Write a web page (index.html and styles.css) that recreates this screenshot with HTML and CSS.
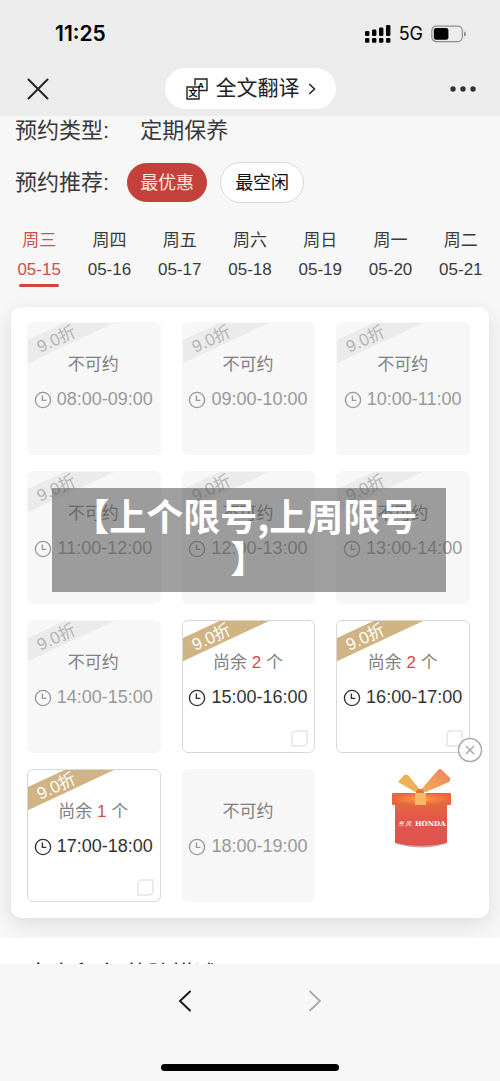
FILE: index.html
```html
<!DOCTYPE html>
<html lang="zh-CN">
<head>
<meta charset="utf-8">
<meta name="viewport" content="width=device-width, initial-scale=1">
<title>预约</title>
<link rel="stylesheet" href="styles.css">
</head>
<body>
<svg class="defs" aria-hidden="true">
  <symbol id="clock" viewBox="0 0 18 18"><circle cx="9" cy="9" r="7.6"/><path d="M8.4 4.6V9.4H12.4"/></symbol>
</svg>
<div class="app">
  <header class="top">
    <div class="status">
      <span class="time">11:25</span>
      <div class="status-icons">
        <svg width="26" height="18" viewBox="0 0 26 18" aria-hidden="true"><rect x="0" y="6" width="4.4" height="5" rx="1.3"/><rect x="7" y="4.500" width="4.400" height="6.500" rx="1.300"/><rect x="14" y="2.500" width="4.400" height="8.500" rx="1.300"/><rect x="21" y="0" width="4.400" height="11" rx="1.300"/><rect x="0" y="13" width="4.400" height="4.800" rx="1.300"/><rect x="7" y="13" width="4.400" height="4.800" rx="1.300"/><rect x="14" y="13" width="4.400" height="4.800" rx="1.300"/><rect x="21" y="13" width="4.400" height="4.800" rx="1.300"/></svg>
        <span class="network">5G</span>
        <svg width="36" height="18" viewBox="0 0 36 18" aria-hidden="true"><rect x=".8" y="1.200" width="30.500" height="15.400" rx="4.500" fill="none" stroke="#8d8d8d" stroke-width="1.200"/><rect x="2.800" y="3" width="14.600" height="11.800" rx="2.500"/><path d="M33 6.500q2 .5 2 2.500t-2 2.500z" fill="#8d8d8d"/></svg>
      </div>
    </div>
    <div class="bar">
      <button class="icon-btn" type="button" aria-label="关闭"><svg width="22" height="22" viewBox="0 0 22 22"><path d="M1.500 1.500 20.500 20.500M20.500 1.500 1.500 20.500" fill="none" stroke="#262626" stroke-width="2" stroke-linecap="round"/></svg></button>
      <button class="translate" type="button">
        <svg width="22" height="22" viewBox="0 0 22 22" aria-hidden="true"><path d="M9 7.500V1H21V12.500H13.500M1 9H13V21H1Z" fill="none" stroke="#222" stroke-width="1.400"/><text class="glyph-a" x="15" y="9.600" text-anchor="middle">A</text><text class="glyph-w" x="7" y="18.400" text-anchor="middle">文</text></svg>
        <span>全文翻译</span>
        <svg width="8" height="12" viewBox="0 0 8 12" aria-hidden="true"><path d="M1.300 1 6.500 6 1.300 11" fill="none" stroke="#222" stroke-width="1.500"/></svg>
      </button>
      <button class="icon-btn" type="button" aria-label="更多"><svg width="26" height="6" viewBox="0 0 26 6" fill="#333"><circle cx="3" cy="3" r="2.700"/><circle cx="13" cy="3" r="2.700"/><circle cx="23" cy="3" r="2.700"/></svg></button>
    </div>
  </header>

  <main class="content">
    <div class="field type"><span>预约类型:</span><span class="value">定期保养</span></div>
    <div class="field recommend"><span>预约推荐:</span>
      <div class="chips"><button class="chip chip-on" type="button">最优惠</button><button class="chip" type="button">最空闲</button></div>
    </div>

    <nav class="days">
      <a class="day day-on" href="#d15"><span>周三</span><span>05-15</span></a>
      <a class="day" href="#d16"><span>周四</span><span>05-16</span></a>
      <a class="day" href="#d17"><span>周五</span><span>05-17</span></a>
      <a class="day" href="#d18"><span>周六</span><span>05-18</span></a>
      <a class="day" href="#d19"><span>周日</span><span>05-19</span></a>
      <a class="day" href="#d20"><span>周一</span><span>05-20</span></a>
      <a class="day" href="#d21"><span>周二</span><span>05-21</span></a>
    </nav>

    <section class="slots">
      <div class="slot"><span class="ribbon">9.0折</span><span class="state">不可约</span><span class="hours"><svg><use href="#clock"/></svg>08:00-09:00</span></div>
      <div class="slot"><span class="ribbon">9.0折</span><span class="state">不可约</span><span class="hours"><svg><use href="#clock"/></svg>09:00-10:00</span></div>
      <div class="slot"><span class="ribbon">9.0折</span><span class="state">不可约</span><span class="hours"><svg><use href="#clock"/></svg>10:00-11:00</span></div>
      <div class="slot"><span class="ribbon">9.0折</span><span class="state">不可约</span><span class="hours"><svg><use href="#clock"/></svg>11:00-12:00</span></div>
      <div class="slot"><span class="ribbon">9.0折</span><span class="state">不可约</span><span class="hours"><svg><use href="#clock"/></svg>12:00-13:00</span></div>
      <div class="slot"><span class="ribbon">9.0折</span><span class="state">不可约</span><span class="hours"><svg><use href="#clock"/></svg>13:00-14:00</span></div>
      <div class="slot"><span class="ribbon">9.0折</span><span class="state">不可约</span><span class="hours"><svg><use href="#clock"/></svg>14:00-15:00</span></div>
      <label class="slot open"><span class="ribbon">9.0折</span><span class="state">尚余 <b>2</b> 个</span><span class="hours"><svg><use href="#clock"/></svg>15:00-16:00</span><input class="pick" type="checkbox"></label>
      <label class="slot open"><span class="ribbon">9.0折</span><span class="state">尚余 <b>2</b> 个</span><span class="hours"><svg><use href="#clock"/></svg>16:00-17:00</span><input class="pick" type="checkbox"></label>
      <label class="slot open"><span class="ribbon">9.0折</span><span class="state">尚余 <b>1</b> 个</span><span class="hours"><svg><use href="#clock"/></svg>17:00-18:00</span><input class="pick" type="checkbox"></label>
      <div class="slot"><span class="state">不可约</span><span class="hours"><svg><use href="#clock"/></svg>18:00-19:00</span></div>
    </section>

    <section class="remarks">客户留言/故障描述</section>

    <h1 class="banner">【上个限号,上周限号&nbsp;<br>】</h1>

    <aside class="gift">
      <button class="gift-close" type="button" aria-label="关闭礼品"><svg width="26" height="26" viewBox="0 0 26 26"><circle cx="13" cy="13" r="11.500" fill="#fff" fill-opacity=".7"/><path d="M9 9l8 8M17 9l-8 8"/></svg></button>
      <svg class="gift-box" width="60" height="80" viewBox="0 0 60 80" role="img" aria-label="东风 HONDA">
        <defs>
          <linearGradient id="body" x1="0" y1="0" x2="0" y2="1"><stop offset="0" stop-color="#e5683f"/><stop offset=".35" stop-color="#e25749"/><stop offset="1" stop-color="#df5351"/></linearGradient>
          <radialGradient id="lid"><stop offset="0" stop-color="#f8a144"/><stop offset="1" stop-color="#e8663f"/></radialGradient>
          <linearGradient id="bow" x1="0" y1="1" x2="1" y2="0"><stop offset="0" stop-color="#f3ad55"/><stop offset="1" stop-color="#ed855f"/></linearGradient>
        </defs>
        <path d="M5 75Q30 82 53 75V71H5Z" fill="#d9a3a8"/>
        <path d="M3 34H55V74Q30 80 3 74Z" fill="url(#body)"/>
        <path d="M6 13 12 6Q14 5 16 6L29 22 25 24Z" fill="#efb057"/>
        <path d="M28 22 46 1Q48-1 50 1L58 9Q59 11 57 13L34 23Z" fill="url(#bow)"/>
        <rect y="24" width="59" height="12" rx="1" fill="url(#lid)"/>
        <path d="M24 24q0-4 4-4t4 4z" fill="#da763e"/>
        <path d="M23 24H34V36H23Z" fill="#f9b765"/>
        <text class="gift-cn" x="6" y="57">东 风</text><text class="gift-en" x="23" y="57">HONDA</text>
      </svg>
    </aside>
  </main>

  <footer class="bottom">
    <div class="pager">
      <button class="icon-btn" type="button" aria-label="后退"><svg width="14" height="22" viewBox="0 0 14 22"><path d="M12 1.500 2 11 12 20.500" fill="none" stroke="#1d1d1d" stroke-width="2" stroke-linecap="round"/></svg></button>
      <button class="icon-btn" type="button" aria-label="前进"><svg width="14" height="22" viewBox="0 0 14 22"><path d="M2 1.500 12 11 2 20.500" fill="none" stroke="#aaa" stroke-width="1.800" stroke-linecap="round"/></svg></button>
    </div>
    <div class="home"></div>
  </footer>
</div>
</body>
</html>
```
FILE: styles.css
```css
* { box-sizing: border-box; }
body { margin: 0; font-family: "Liberation Sans", "Noto Sans CJK SC", sans-serif; color: #3a3a3a; background: #f7f7f7; }
button { font: inherit; color: inherit; border: 0; padding: 0; background: none; }
svg { display: block; flex: none; }
.defs { position: absolute; width: 0; height: 0; }
.app { display: flex; flex-direction: column; height: 100vh; }

.top { flex: none; background: #ececec; padding: 16px 24px 7px; }
.status { display: flex; align-items: center; justify-content: space-between; height: 36px; padding: 0 9px 0 31px; color: #000; }
.time { font: 600 21px/36px Inter, sans-serif; }
.status-icons { display: flex; align-items: center; gap: 8px; }
.network { font: 400 18px/36px Inter, sans-serif; }
.bar { display: grid; grid-template-columns: 1fr auto 1fr; align-items: center; margin-top: 16px; }
.icon-btn { display: flex; padding: 3px; }
.bar .icon-btn:last-child { justify-self: end; padding: 3px 0; }
.translate { display: flex; align-items: center; justify-content: center; gap: 8px; height: 41px; padding: 0 20px 0 21px; border-radius: 21px; background: #fff; color: #222; font-size: 21px; line-height: 38px; }
.translate span { padding-bottom: 2px; }
.glyph-a { font: 700 8px "Liberation Sans", sans-serif; }
.glyph-w { font: 700 9px "Noto Sans CJK SC", sans-serif; }

.content { position: relative; flex: 1; min-height: 0; padding-top: 1px; overflow: hidden; }
.field { display: flex; align-items: center; padding: 0 15px; font-size: 22px; line-height: 28px; }
.value { margin-left: 31px; }
.recommend { height: 41px; margin-top: 17px; }
.chips { display: flex; align-items: center; gap: 13px; margin-left: 18px; }
.chip { height: 41px; padding: 0 14px; border: 1px solid #d8d8d8; border-radius: 21px; background: #fff; color: #111; font-size: 18px; }
.chip-on { height: 39px; border-color: #c4413b; background: #c4413b; color: #fbe3e0; padding: 0 12px; }

.days { display: grid; grid-template-columns: repeat(7, 1fr); margin-top: 23px; padding: 0 4px; }
.day { display: flex; flex-direction: column; align-items: center; color: #3a3a3a; font-size: 17px; line-height: 29px; text-decoration: none; }
.day::after { content: ""; width: 40px; height: 3px; border-radius: 2px; }
.day-on { color: #d14e47; }
.day-on::after { background: #cf4640; }

.slots { display: grid; grid-template-columns: repeat(3, 1fr); gap: 16px 21px; margin: 20px 11px; padding: 15px 19px 16px 16px; border-radius: 10px; background: #fff; box-shadow: 0 6px 20px rgba(0, 0, 0, .11); }
.slot { position: relative; display: flex; flex-direction: column; align-items: center; gap: 10px; height: 133px; padding: 29px 6px 5px 5px; overflow: hidden; border: 1px solid #f7f7f7; border-radius: 6px; background: #f7f7f7; color: #999; line-height: 25px; }
.ribbon { position: absolute; left: -37px; top: 5px; width: 130px; height: 21px; background: #ebebeb; color: #b5b5b5; font-size: 17px; line-height: 24px; text-align: center; transform: rotate(-25deg); }
.state { color: #808080; font-size: 17px; }
.state b { color: #d14e47; font-weight: 400; }
.hours { display: flex; align-items: center; gap: 5px; font-size: 18px; white-space: nowrap; }
.hours svg { width: 18px; height: 18px; fill: none; stroke: currentColor; stroke-width: 1.4; }
.open { border-color: #d8d8d8; background: #fff; color: #333; }
.open .ribbon { background: #d0b484; color: #fff; }
.pick { appearance: none; align-self: flex-end; width: 17px; height: 17px; margin: auto 0 0; border: 2px solid #ebebeb; border-radius: 5px 0; background: #fff; }

.remarks { position: relative; padding: 20px 27px; background: #fff; color: #222; font-size: 23px; line-height: 32px; }

.banner { position: absolute; top: 372px; left: 52px; right: 54px; margin: 0; padding: 6px 0 14px; background: rgba(90, 90, 90, .58); color: #fff; font: 700 37px/42px "Noto Sans CJK SC", sans-serif; text-align: center; }

.gift { position: absolute; top: 621px; right: 17px; display: flex; flex-direction: column; width: 91px; }
.gift-close { align-self: flex-end; }
.gift-close svg { fill: none; stroke: #aaa; stroke-width: 1.5; }
.gift-box { margin-top: 6px; }
.gift-cn { fill: #fff; font: italic 6px "Noto Sans CJK SC", sans-serif; }
.gift-en { fill: #fff; font: 700 7px "DejaVu Serif", serif; }

.bottom { flex: none; display: flex; flex-direction: column; justify-content: space-between; align-items: center; height: 117px; padding: 23px 0 10px; background: #f7f7f7; }
.pager { display: flex; gap: 110px; }
.home { width: 178px; height: 7px; border-radius: 4px; background: #000; }
```
